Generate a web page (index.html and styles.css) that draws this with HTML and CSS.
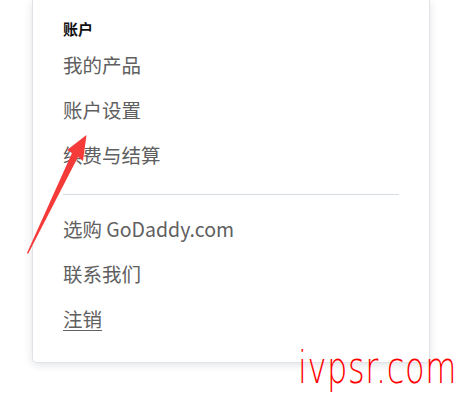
FILE: index.html
```html
<!DOCTYPE html>
<html lang="zh-CN">
<head>
<meta charset="utf-8">
<link rel="stylesheet" href="styles.css">
</head>
<body>
<div class="page">
  <div class="card">
    <div class="section-title">账户</div>
    <ul class="menu">
      <li class="item">我的产品</li>
      <li class="item">账户设置</li>
      <li class="item">续费与结算</li>
    </ul>
    <div class="divider"></div>
    <ul class="menu menu-second">
      <li class="item">选购 GoDaddy.com</li>
      <li class="item">联系我们</li>
      <li class="item"><span class="link">注销</span></li>
    </ul>
  </div>
  <svg class="arrow" width="100" height="140" viewBox="0 0 100 140">
    <polygon points="7,128 8,129 58,32 63,36 66.5,10 47,25 52,28" fill="#f53a3a"/>
  </svg>
  <div class="watermark">ivpsr.com</div>
</div>
</body>
</html>
```
FILE: styles.css
```css
html, body {
  margin: 0;
  padding: 0;
  background: #ffffff;
}
.page {
  position: relative;
  width: 464px;
  height: 400px;
  overflow: hidden;
}
.card {
  margin-left: 32px;
  width: 398px;
  box-sizing: border-box;
  padding: 18px 30px 21px 30px;
  background: #fff;
  border: 1px solid #dfe2e6;
  border-top: none;
  border-radius: 0 0 5px 5px;
  box-shadow: 0 2px 8px rgba(30, 40, 60, 0.13);
  font-family: "Noto Sans CJK SC", "Noto Sans", sans-serif;
}
.section-title {
  font-size: 15px;
  line-height: 22px;
  font-weight: 700;
  color: #111;
  margin-bottom: 2px;
}
.menu {
  list-style: none;
  margin: 0;
  padding: 0;
}
.item {
  height: 45px;
  line-height: 45px;
  font-size: 19.5px;
  color: #606060;
}
.divider {
  margin-top: 17px;
  height: 1px;
  background: #d5dce2;
}
.menu-second {
  margin-top: 11px;
}
.link {
  text-decoration: underline;
  text-underline-offset: 3px;
}
.arrow {
  position: absolute;
  left: 20px;
  top: 125px;
}
.watermark {
  position: absolute;
  left: 298px;
  top: 356px;
  font-family: "DejaVu Sans ExtraLight", "DejaVu Sans", sans-serif;
  font-weight: 200;
  font-size: 32px;
  line-height: 40px;
  letter-spacing: 0.6px;
  color: #ff0000;
  transform: scaleY(1.4);
  transform-origin: left bottom;
}
```
